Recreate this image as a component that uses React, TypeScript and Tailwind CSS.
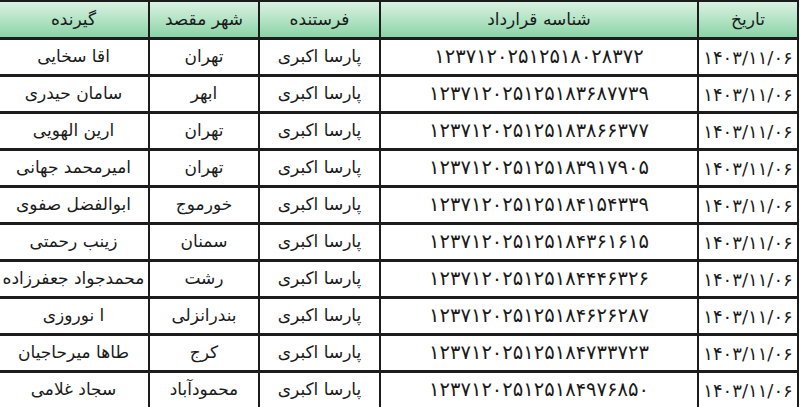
const rows = [
  { date: "۱۴۰۳/۱۱/۰۶", id: "۱۲۳۷۱۲۰۲۵۱۲۵۱۸۰۲۸۳۷۲", sender: "پارسا اکبری", city: "تهران", receiver: "اقا سخایی" },
  { date: "۱۴۰۳/۱۱/۰۶", id: "۱۲۳۷۱۲۰۲۵۱۲۵۱۸۳۶۸۷۷۳۹", sender: "پارسا اکبری", city: "ابهر", receiver: "سامان حیدری" },
  { date: "۱۴۰۳/۱۱/۰۶", id: "۱۲۳۷۱۲۰۲۵۱۲۵۱۸۳۸۶۶۳۷۷", sender: "پارسا اکبری", city: "تهران", receiver: "ارین الهویی" },
  { date: "۱۴۰۳/۱۱/۰۶", id: "۱۲۳۷۱۲۰۲۵۱۲۵۱۸۳۹۱۷۹۰۵", sender: "پارسا اکبری", city: "تهران", receiver: "امیرمحمد جهانی" },
  { date: "۱۴۰۳/۱۱/۰۶", id: "۱۲۳۷۱۲۰۲۵۱۲۵۱۸۴۱۵۴۳۳۹", sender: "پارسا اکبری", city: "خورموج", receiver: "ابوالفضل  صفوی" },
  { date: "۱۴۰۳/۱۱/۰۶", id: "۱۲۳۷۱۲۰۲۵۱۲۵۱۸۴۳۶۱۶۱۵", sender: "پارسا اکبری", city: "سمنان", receiver: "زینب  رحمتی" },
  { date: "۱۴۰۳/۱۱/۰۶", id: "۱۲۳۷۱۲۰۲۵۱۲۵۱۸۴۴۴۶۳۲۶", sender: "پارسا اکبری", city: "رشت", receiver: "محمدجواد جعفرزاده" },
  { date: "۱۴۰۳/۱۱/۰۶", id: "۱۲۳۷۱۲۰۲۵۱۲۵۱۸۴۶۲۶۲۸۷", sender: "پارسا اکبری", city: "بندرانزلی", receiver: "ا نوروزی" },
  { date: "۱۴۰۳/۱۱/۰۶", id: "۱۲۳۷۱۲۰۲۵۱۲۵۱۸۴۷۳۳۷۲۳", sender: "پارسا اکبری", city: "کرج", receiver: "طاها میرحاجیان" },
  { date: "۱۴۰۳/۱۱/۰۶", id: "۱۲۳۷۱۲۰۲۵۱۲۵۱۸۴۹۷۶۸۵۰", sender: "پارسا اکبری", city: "محمودآباد", receiver: "سجاد غلامی" },
];

const cell = "border-x-2 border-y-[3px] border-[#1c1c1c] text-center whitespace-nowrap p-0";

export default function App() {
  return (
    <div className="w-[800px] h-[407px] overflow-hidden bg-white">
      <table
        dir="rtl"
        className="border-collapse table-fixed w-[800px] -mt-px ml-[-3px] text-[17px] text-[#1a1a1a] font-['DejaVu_Sans','Noto_Sans_Arabic',sans-serif]"
      >
        <colgroup>
          <col className="w-[100px]" />
          <col className="w-[318px]" />
          <col className="w-[121px]" />
          <col className="w-[110px]" />
          <col className="w-[151px]" />
        </colgroup>
        <thead>
          <tr className="h-[38px] bg-linear-to-b from-[#dcf2e4] via-[#b2e3c4] to-[#84d2a3]">
            <th className={cell + " font-normal"}>تاریخ</th>
            <th className={cell + " font-normal"}>شناسه قرارداد</th>
            <th className={cell + " font-normal"}>فرستنده</th>
            <th className={cell + " font-normal"}>شهر مقصد</th>
            <th className={cell + " font-normal"}>گیرنده</th>
          </tr>
        </thead>
        <tbody>
          {rows.map((r, i) => (
            <tr key={i} className="h-[37px]">
              <td className={cell + " text-[18px]"}>{r.date}</td>
              <td className={cell + " text-[19.5px]"}>{r.id}</td>
              <td className={cell}>{r.sender}</td>
              <td className={cell}>{r.city}</td>
              <td className={cell}>{r.receiver}</td>
            </tr>
          ))}
        </tbody>
      </table>
    </div>
  );
}
